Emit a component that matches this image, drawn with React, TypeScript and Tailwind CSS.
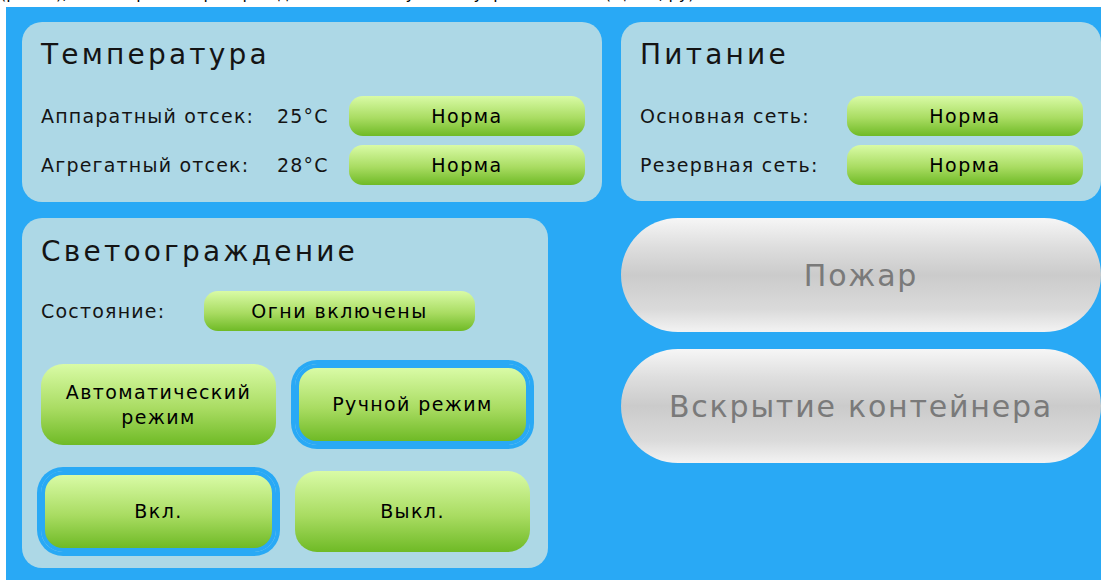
const font = { fontFamily: '"DejaVu Sans", "Liberation Sans", sans-serif' };

const green = 'bg-[linear-gradient(to_bottom,#d9fba6_0%,#a9dc62_55%,#6fba26_100%)]';
const gray =
  'bg-[linear-gradient(to_bottom,#f6f6f6_0%,#dedede_25%,#cbcbcb_50%,#dadada_80%,#f3f3f3_100%)]';
const selected = 'border-4 border-[#29a9f5] ring-4 ring-[#29a9f5]';

function Status({ text, className = '' }: { text: string; className?: string }) {
  return (
    <div
      className={`${green} rounded-[14px] flex items-center justify-center text-[19px] tracking-[1.5px] text-black ${className}`}
    >
      {text}
    </div>
  );
}

function Row({
  label,
  value,
  status,
  labelWidth,
}: {
  label: string;
  value?: string;
  status: string;
  labelWidth: string;
}) {
  return (
    <div className="flex items-center h-[40px]">
      <span className={`${labelWidth} text-[19px] tracking-[1.2px]`}>{label}</span>
      {value !== undefined && <span className="w-[72px] text-[19px] tracking-[1.2px]">{value}</span>}
      <Status text={status} className="w-[236px] h-[40px]" />
    </div>
  );
}

function ModeButton({ text, active }: { text: string; active?: boolean }) {
  return (
    <button
      className={`${green} ${active ? selected : ''} w-[235px] h-[81px] rounded-[22px] flex items-center justify-center text-center whitespace-pre-line text-[19px] tracking-[1.4px] leading-[25px] text-black`}
    >
      {text}
    </button>
  );
}

function AlarmButton({ text }: { text: string }) {
  return (
    <div
      className={`${gray} w-[480px] h-[114px] rounded-full flex items-center justify-center text-[30px] tracking-[1.8px] text-[#7a7a7a]`}
    >
      {text}
    </div>
  );
}

export default function App() {
  return (
    <div className="w-[1101px] h-[580px] bg-white overflow-hidden text-[#141414]" style={font}>
      {/* caption line above the panel, cut by the frame */}
      <div className="h-[7px] overflow-hidden">
        <p className="mt-[-16px] leading-[20px] text-[16px] whitespace-nowrap text-black">
          (рис. 3), на котором оператор видит состояние узлов и управляет ими (щиты, ру)
        </p>
      </div>

      <div className="ml-[6px] h-[573px] bg-[#29a9f5] pl-[16px] pt-[15px] flex gap-[19px]">
        {/* left column */}
        <div className="flex flex-col gap-[16px]">
          <section className="w-[580px] h-[180px] rounded-[20px] bg-[#add8e6] pl-[19px] pt-[16px]">
            <h2 className="text-[28px] tracking-[3.2px] leading-[34px]">Температура</h2>
            <div className="mt-[24px] flex flex-col gap-[9px]">
              <Row label="Аппаратный отсек:" value="25°C" status="Норма" labelWidth="w-[236px]" />
              <Row label="Агрегатный отсек:" value="28°C" status="Норма" labelWidth="w-[236px]" />
            </div>
          </section>

          <section className="w-[526px] h-[350px] rounded-[20px] bg-[#add8e6] pl-[19px] pt-[17px]">
            <h2 className="text-[28px] tracking-[3.2px] leading-[34px]">Светоограждение</h2>
            <div className="mt-[22px] flex items-center h-[40px]">
              <span className="w-[163px] text-[19px] tracking-[1.2px]">Состояние:</span>
              <Status text="Огни включены" className="w-[271px] h-[40px]" />
            </div>
            <div className="mt-[33px] grid grid-cols-[235px_235px] gap-x-[19px] gap-y-[26px]">
              <ModeButton text={'Автоматический\nрежим'} />
              <ModeButton text="Ручной режим" active />
              <ModeButton text="Вкл." active />
              <ModeButton text="Выкл." />
            </div>
          </section>
        </div>

        {/* right column */}
        <div className="flex flex-col gap-[16px]">
          <section className="w-[480px] h-[179px] rounded-[20px] bg-[#add8e6] pl-[19px] pt-[16px]">
            <h2 className="text-[28px] tracking-[3.2px] leading-[34px]">Питание</h2>
            <div className="mt-[24px] flex flex-col gap-[9px]">
              <Row label="Основная сеть:" status="Норма" labelWidth="w-[207px]" />
              <Row label="Резервная сеть:" status="Норма" labelWidth="w-[207px]" />
            </div>
          </section>
          <div className="flex flex-col gap-[17px] pt-[1px]">
            <AlarmButton text="Пожар" />
            <AlarmButton text="Вскрытие контейнера" />
          </div>
        </div>
      </div>
    </div>
  );
}
